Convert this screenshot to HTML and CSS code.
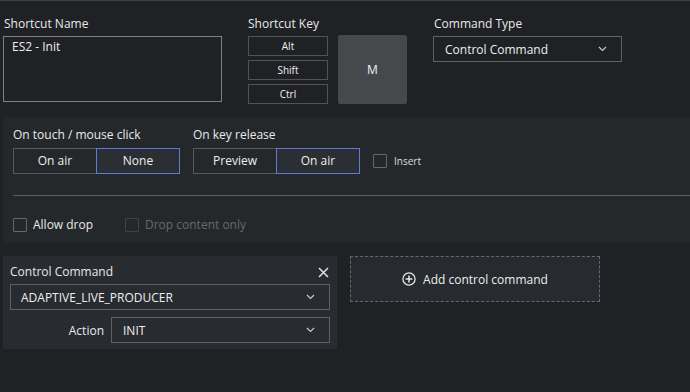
FILE: index.html
```html
<!DOCTYPE html>
<html>
<head>
<meta charset="utf-8">
<link rel="stylesheet" href="styles.css">
</head>
<body>
<div class="top">
  <div class="col-name">
    <div class="label">Shortcut Name</div>
    <div class="textarea">ES2 - Init</div>
  </div>
  <div class="col-key">
    <div class="label">Shortcut Key</div>
    <div class="key-row">
      <div class="mods">
        <div class="mod">Alt</div>
        <div class="mod">Shift</div>
        <div class="mod">Ctrl</div>
      </div>
      <div class="keycap">M</div>
    </div>
  </div>
  <div class="col-type">
    <div class="label">Command Type</div>
    <div class="select type-select">
      <span>Control Command</span>
      <svg class="chev" width="9" height="6" viewBox="0 0 9 6"><path d="M1 1 L4.5 4.5 L8 1" fill="none" stroke="#c9cacc" stroke-width="1.2"/></svg>
    </div>
  </div>
</div>

<div class="panel triggers">
  <div class="trig-row">
    <div class="group">
      <div class="label">On touch / mouse click</div>
      <div class="seg">
        <div class="seg-item">On air</div>
        <div class="seg-item selected">None</div>
      </div>
    </div>
    <div class="group">
      <div class="label">On key release</div>
      <div class="seg">
        <div class="seg-item">Preview</div>
        <div class="seg-item selected">On air</div>
      </div>
    </div>
    <div class="insert">
      <span class="box"></span>
      <span class="insert-text">Insert</span>
    </div>
  </div>
  <div class="divider"></div>
  <div class="checks">
    <div class="check allow"><span class="box"></span><span>Allow drop</span></div>
    <div class="check disabled"><span class="box"></span><span>Drop content only</span></div>
  </div>
</div>

<div class="bottom">
  <div class="cc-panel">
    <div class="cc-head">
      <span class="label">Control Command</span>
      <svg class="close" width="11" height="11" viewBox="0 0 11 11"><path d="M1 1 L10 10 M10 1 L1 10" fill="none" stroke="#e4e4e4" stroke-width="1.5"/></svg>
    </div>
    <div class="select">
      <span>ADAPTIVE_LIVE_PRODUCER</span>
      <svg class="chev" width="9" height="6" viewBox="0 0 9 6"><path d="M1 1 L4.5 4.5 L8 1" fill="none" stroke="#c9cacc" stroke-width="1.2"/></svg>
    </div>
    <div class="action-row">
      <span class="action-label">Action</span>
      <div class="select action-select">
        <span>INIT</span>
        <svg class="chev" width="9" height="6" viewBox="0 0 9 6"><path d="M1 1 L4.5 4.5 L8 1" fill="none" stroke="#c9cacc" stroke-width="1.2"/></svg>
      </div>
    </div>
  </div>
  <div class="add-box">
    <svg width="14" height="14" viewBox="0 0 14 14"><circle cx="7" cy="7" r="6.1" fill="none" stroke="#e6e6e6" stroke-width="1.3"/><path d="M7 3.6 V10.4 M3.6 7 H10.4" stroke="#e6e6e6" stroke-width="1.5"/></svg>
    <span>Add control command</span>
  </div>
</div>
</body>
</html>
```

FILE: styles.css
```css
* { box-sizing: border-box; }

html, body {
  margin: 0;
  padding: 0;
}

body {
  background: #1f2125;
  color: #e8e9ea;
  font-family: "Open Sans", "DejaVu Sans", sans-serif;
  font-size: 12px;
  line-height: 17px;
  border-top: 1px solid #3e4145;
  width: 690px;
  height: 392px;
  overflow: hidden;
}

.label {
  line-height: 17px;
  color: #e8e9ea;
}

/* top section */
.top {
  display: flex;
  gap: 26px;
  height: 116px;
  padding: 14px 0 0 3px;
}

.top .label {
  margin-bottom: 4px;
  padding-left: 1px;
}

.col-key .label { padding-left: 0; }

.col-name { width: 219px; }

.textarea {
  height: 66px;
  border: 1px solid #7d7f82;
  padding: 1px 8px;
  color: #eeeeee;
}

.key-row {
  display: flex;
  gap: 10px;
  align-items: flex-start;
}

.mods {
  display: flex;
  flex-direction: column;
  gap: 4px;
}

.mod {
  width: 80px;
  height: 20px;
  border: 1px solid #4f5256;
  font-size: 10px;
  line-height: 18px;
  text-align: center;
  color: #f0f0f0;
}

.keycap {
  width: 69px;
  height: 69px;
  margin-top: -1px;
  background: #46494c;
  border-radius: 2px;
  display: flex;
  align-items: center;
  justify-content: center;
  font-size: 12px;
  color: #eef0f2;
}

.select {
  height: 26px;
  border: 1px solid #5e6165;
  display: flex;
  align-items: center;
  justify-content: space-between;
  padding: 0 14px 0 10px;
  color: #eeeeee;
}

.type-select {
  width: 189px;
  padding-left: 11px;
}

.chev { display: block; }

/* triggers panel */
.panel {
  margin-left: 3px;
  background: #25282b;
}

.triggers {
  height: 126px;
  padding: 9px 0 0 10px;
}

.trig-row {
  display: flex;
  gap: 13px;
  align-items: flex-end;
}

.group .label {
  margin-bottom: 5px;
}

.seg {
  display: flex;
}

.seg-item {
  width: 84px;
  height: 26px;
  border: 1px solid #56595d;
  text-align: center;
  line-height: 24px;
  color: #eeeeee;
}

.seg-item + .seg-item {
  margin-left: -1px;
}

.seg-item.selected {
  border-color: #5b79d9;
  background: #2b2e32;
  position: relative;
}

.insert {
  height: 26px;
  display: flex;
  align-items: center;
  gap: 7px;
}

.box {
  display: inline-block;
  width: 14px;
  height: 14px;
  border: 1px solid #64676b;
  border-radius: 1px;
}

.insert-text {
  font-size: 10px;
  color: #dcdcdc;
}

.divider {
  margin-top: 21px;
  height: 1px;
  background: #5b5e62;
}

.checks {
  display: flex;
  margin-top: 22px;
  height: 14px;
  align-items: center;
}

.check {
  display: flex;
  align-items: center;
  gap: 6px;
  line-height: 14px;
}

.check.allow {
  width: 112px;
}

.check.disabled {
  color: #65686c;
}

.check.disabled .box {
  border-color: #3f4246;
}

/* bottom */
.bottom {
  display: flex;
  gap: 13px;
  margin-top: 13px;
  padding-left: 3px;
  align-items: flex-start;
}

.cc-panel {
  width: 334px;
  background: #282b2f;
  padding: 7px 7px 6px 7px;
}

.cc-head {
  display: flex;
  justify-content: space-between;
  align-items: center;
  height: 17px;
  margin-bottom: 4px;
}

.close {
  display: block;
  margin-right: 1px;
  margin-top: 1px;
}

.action-row {
  display: flex;
  align-items: center;
  gap: 7px;
  margin-top: 7px;
}

.action-label {
  width: 94px;
  text-align: right;
}

.action-select {
  flex: 1;
  padding-left: 11px;
}

.add-box {
  width: 250px;
  height: 46px;
  border: 1px dashed #65686c;
  background: #272a2e;
  display: flex;
  align-items: center;
  justify-content: center;
  gap: 7px;
  font-size: 12px;
  color: #eeeeee;
}

.add-box svg { display: block; }
```
